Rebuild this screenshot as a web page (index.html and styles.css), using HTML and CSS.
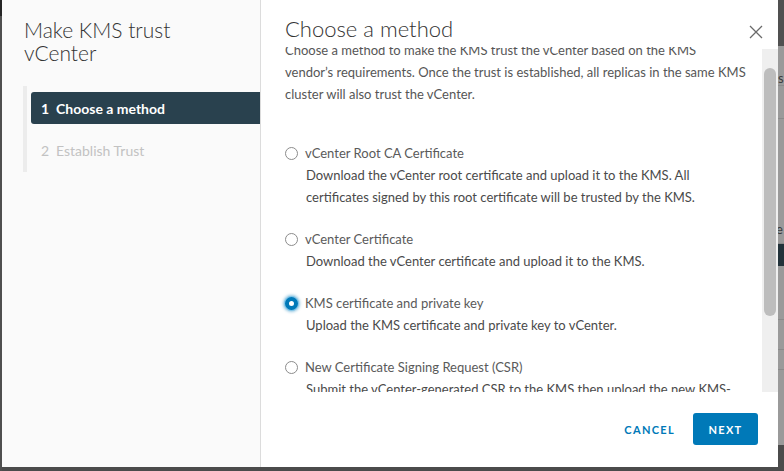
FILE: index.html
```html
<!DOCTYPE html>
<html lang="en">
<head>
<meta charset="utf-8">
<title>Make KMS trust vCenter</title>
<link rel="stylesheet" href="styles.css">
</head>
<body>
<div class="screen">
  <div class="edge-left"></div>
  <div class="modal">
    <aside class="side">
      <h1 class="side-title">Make KMS trust vCenter</h1>
      <ol class="steps">
        <li class="step active"><span class="num">1</span>Choose a method</li>
        <li class="step"><span class="num">2</span>Establish Trust</li>
      </ol>
    </aside>
    <section class="main">
      <header class="main-head">
        <h2 class="main-title">Choose a method</h2>
        <button class="close" aria-label="Close">
          <svg width="14" height="14" viewBox="0 0 14 14"><path d="M1 1 L13 13 M13 1 L1 13" stroke="#6a6a6a" stroke-width="1.3" fill="none"/></svg>
        </button>
      </header>
      <div class="body">
        <div class="scroll">
          <div class="content">
            <p class="intro">Choose a method to make the KMS trust the vCenter based on the KMS vendor’s requirements. Once the trust is established, all replicas in the same KMS cluster will also trust the vCenter.</p>
            <div class="option">
              <label class="opt-label"><span class="radio"></span>vCenter Root CA Certificate</label>
              <p class="opt-desc">Download the vCenter root certificate and upload it to the KMS. All certificates signed by this root certificate will be trusted by the KMS.</p>
            </div>
            <div class="option">
              <label class="opt-label"><span class="radio"></span>vCenter Certificate</label>
              <p class="opt-desc">Download the vCenter certificate and upload it to the KMS.</p>
            </div>
            <div class="option">
              <label class="opt-label"><span class="radio checked"></span>KMS certificate and private key</label>
              <p class="opt-desc">Upload the KMS certificate and private key to vCenter.</p>
            </div>
            <div class="option">
              <label class="opt-label"><span class="radio"></span>New Certificate Signing Request (CSR)</label>
              <p class="opt-desc">Submit the vCenter-generated CSR to the KMS then upload the new KMS-signed certificate to vCenter.</p>
            </div>
          </div>
        </div>
        <div class="track"><div class="thumb"></div></div>
      </div>
      <footer class="foot">
        <button class="btn-link">CANCEL</button>
        <button class="btn-primary">NEXT</button>
      </footer>
    </section>
  </div>
  <div class="edge-right">
    <div class="bg-top"></div>
    <div class="bg-row r1"><span>s</span></div>
    <div class="bg-row r2"></div>
    <div class="bg-row r3"><span>e</span></div>
    <div class="bg-dark"></div>
    <div class="bg-row r4"></div>
    <div class="bg-row r5"></div>
    <div class="bg-row r6"></div>
    <div class="bg-rest"></div>
  </div>
</div>
</body>
</html>
```

FILE: styles.css
```css
* { box-sizing: border-box; }
html, body { margin: 0; padding: 0; }
body {
  background: #4b4b4b;
  font-family: Lato, "Noto Sans", sans-serif;
  color: #565656;
}
.screen {
  display: flex;
  align-items: flex-start;
  width: 784px;
  height: 471px;
  overflow: hidden;
  background: #4b4b4b;
}
.edge-left {
  width: 2px;
  height: 471px;
  background: linear-gradient(#252525 0, #252525 16px, #4f4f4f 16px);
}
.modal {
  width: 776px;
  height: 467px;
  display: flex;
  background: #fff;
}

/* Left side */
.side {
  width: 259px;
  background: #fafafa;
  border-right: 1px solid #dcdcdc;
  padding-top: 18px;
}
.side-title {
  margin: 0 0 0 22px;
  font-size: 21px;
  font-weight: 300;
  line-height: 23px;
  color: #333;
  width: 170px;
}
.steps {
  list-style: none;
  margin: 22px 0 0 21px;
  padding: 6px 0 6px 4px;
  border-left: 4px solid #ececec;
  display: flex;
  flex-direction: column;
  gap: 10px;
}
.step {
  height: 32px;
  display: flex;
  align-items: center;
  padding-left: 10px;
  font-size: 14px;
  color: #c2c2c2;
  border-radius: 3px 0 0 3px;
}
.step .num { width: 15px; }
.step.active {
  background: #29414e;
  color: #fff;
  font-weight: 700;
}

/* Main */
.main {
  width: 517px;
  display: flex;
  flex-direction: column;
}
.main-head {
  height: 47px;
  display: flex;
  align-items: flex-start;
  justify-content: space-between;
  padding: 16px 15px 0 24px;
}
.main-title {
  margin: 0;
  font-size: 22px;
  font-weight: 300;
  line-height: 26px;
  color: #333;
}
.close {
  border: 0;
  background: none;
  padding: 0;
  margin-top: 9px;
  width: 14px;
  height: 14px;
  display: flex;
}
.body {
  height: 345px;
  display: flex;
}
.scroll {
  flex: 1;
  overflow: hidden;
}
.content {
  margin-top: -8px;
  padding: 0 16px 0 24px;
  font-size: 13px;
  line-height: 22px;
}
.intro { margin: 0 0 37px; color: #565656; }
.option { margin-bottom: 20px; }
.opt-label {
  display: flex;
  align-items: center;
  color: #5a5a5a;
}
.radio {
  width: 13px;
  height: 13px;
  border: 1px solid #8c8c8c;
  border-radius: 50%;
  margin-right: 7px;
  background: #fff;
  flex: none;
}
.radio.checked {
  border: 4.5px solid #0079b8;
  background: #fff;
  box-shadow: 0 0 0 1px #7fc4e8, 0 0 3px 2px rgba(0, 121, 184, 0.45);
}
.opt-desc {
  margin: 0;
  padding-left: 21px;
  color: #4a4a4a;
}
.track {
  width: 16px;
  margin-top: 2px;
  background: #efefef;
  padding: 19px 2px 0 2px;
}
.thumb {
  height: 248px;
  background: #bdbdbd;
  border-radius: 6px;
}

/* Footer */
.foot {
  height: 75px;
  display: flex;
  justify-content: flex-end;
  align-items: flex-start;
  padding: 21px 20px 0 0;
  gap: 6px;
}
.foot button {
  height: 32px;
  border: 0;
  font-family: Lato, "Noto Sans", sans-serif;
  font-size: 11px;
  font-weight: 700;
  letter-spacing: 0.12em;
  border-radius: 3px;
  cursor: pointer;
}
.btn-link {
  background: none;
  color: #0079b8;
  padding: 0 12px;
  font-weight: 600;
}
.btn-primary {
  background: #0079b8;
  color: #fff;
  width: 65px;
  padding: 0;
}

/* dimmed page at right */
.edge-right {
  flex: 1;
  height: 471px;
  display: flex;
  flex-direction: column;
  background: #9a9a9a;
  overflow: hidden;
  font-size: 13px;
  color: #3a3a3a;
}
.bg-top { height: 46px; background: #505050; }
.bg-row { border-bottom: 1px solid #8a8a8a; }
.bg-row span { display: block; line-height: 14px; }
.r1 { height: 40px; padding-top: 25px; }
.r2 { height: 33px; }
.r3 { height: 125px; padding-top: 103px; margin-left: -2px; }
.bg-dark { height: 22px; background: #22323a; }
.r4 { height: 54px; }
.r5 { height: 30px; }
.r6 { height: 20px; }
.bg-rest { flex: 1; background: linear-gradient(#9a9a9a 0, #9a9a9a 75px, #4b4b4b 75px); }
```
